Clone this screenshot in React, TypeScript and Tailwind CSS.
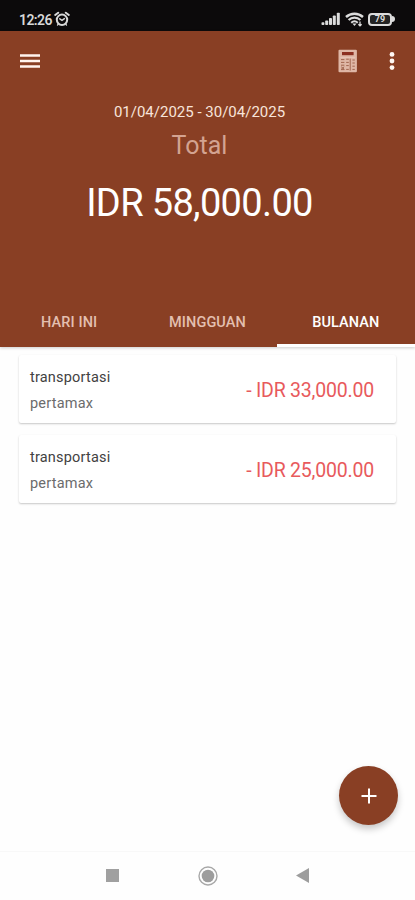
interface Transaction {
  id: number;
  category: string;
  note: string;
  amount: string;
}

const transactions: Transaction[] = [
  { id: 1, category: "transportasi", note: "pertamax", amount: "- IDR 33,000.00" },
  { id: 2, category: "transportasi", note: "pertamax", amount: "- IDR 25,000.00" },
];

const tabs = ["HARI INI", "MINGGUAN", "BULANAN"];

function AlarmIcon() {
  return (
    <svg width="16" height="16" viewBox="0 0 16 16" fill="none" stroke="#d8d8d8" strokeLinecap="round">
      <circle cx="8" cy="8.8" r="5.2" strokeWidth="2" />
      <path d="M1.2 4 4.2 1.7M14.8 4 11.8 1.7" strokeWidth="2" />
      <path d="M5.8 7.8 8 9.4l2.4-1.8" strokeWidth="1.5" />
      <path d="m4.2 13.2-.7.9M11.8 13.2l.7.9" strokeWidth="1.3" />
    </svg>
  );
}

function SignalIcon() {
  return (
    <svg width="20" height="14" viewBox="0 0 20 14" fill="#dcdcdc">
      <rect x="0.5" y="10.2" width="2.9" height="2.8" rx="0.8" />
      <rect x="4.2" y="8.4" width="3" height="4.6" rx="0.8" />
      <rect x="8" y="6" width="3" height="7" rx="0.8" />
      <rect x="11.8" y="3.4" width="3" height="9.6" rx="0.8" />
      <rect x="15.8" y="0.8" width="3" height="12.2" rx="0.8" />
    </svg>
  );
}

function WifiIcon() {
  return (
    <svg width="19" height="15" viewBox="0 0 19 15" fill="none" stroke="#dcdcdc">
      <path d="M1 5C5.8.6 13.2.6 18 5" strokeWidth="2.4" />
      <path d="M3.6 8c3.4-3.1 8.4-3.1 11.8 0" strokeWidth="2.3" />
      <path d="M6.2 10.7c1.9-1.6 4.7-1.6 6.6 0" strokeWidth="2" />
      <path d="M7.4 11.6h4.2L9.5 14z" fill="#dcdcdc" stroke="none" />
      <path d="M15 9.6v4.2M13.4 12.2l1.6 1.6 1.6-1.6" strokeWidth="1.3" />
    </svg>
  );
}

function Battery() {
  return (
    <div className="flex items-center">
      <div className="flex h-[13px] w-[24px] items-center justify-center rounded-[4px] border-2 border-[#dcdcdc] bg-[#242424] text-[9px] leading-none font-bold text-[#dcdcdc]">
        79
      </div>
      <div className="h-[6px] w-[3px] rounded-r-full bg-[#dcdcdc]" />
    </div>
  );
}

function CalculatorIcon() {
  return (
    <svg width="20" height="24" viewBox="0 0 20 24">
      <rect x="0.5" y="0.8" width="18.4" height="22.4" rx="1" fill="#dfb7a6" />
      <rect x="4" y="3" width="11.6" height="3.2" fill="#8c2f20" />
      <path d="M2.4 8.6h14.8" stroke="#e7c6b8" strokeWidth="1" />
      <g stroke="#a1654f" strokeWidth="1" fill="none">
        <path d="M3 10.6h3.4M3 13.4h3.4M3 16.2h3.4M3 20.6h3.4" />
        <path d="m3.2 17.8 3 2.4M6.2 17.8l-3 2.4" />
        <path d="M8.2 10.2h2.6M8.2 13.4h2.6M8.2 16.6h2.6M8.2 20.4h2.6" />
        <path d="M12.2 9.6v12M14.4 11h2.4M14.4 14h2.4M14.4 17.2h2.4M14.4 20.4h2.4" />
      </g>
    </svg>
  );
}

function StatusBar() {
  return (
    <div className="flex h-[31px] items-center justify-between bg-[#0c0a0b] pt-[7px] pr-[20px] pl-[19px]">
      <div className="flex items-center gap-[2px]">
        <span className="w-[33px] pt-[1px] text-[14px] leading-[16px] font-semibold tracking-[-0.6px] text-[#d8d8d8]">
          12:26
        </span>
        <AlarmIcon />
      </div>
      <div className="flex items-center gap-[4px]">
        <SignalIcon />
        <WifiIcon />
        <Battery />
      </div>
    </div>
  );
}

function TransactionCard({ item }: { item: Transaction }) {
  return (
    <div className="flex h-[68px] items-center justify-between rounded-[2px] bg-white pr-[22px] pl-[11px] shadow-[0_1px_2px_rgba(0,0,0,0.22)]">
      <div className="pt-[3px] text-[14.5px] leading-[26px] tracking-[0.2px]">
        <p className="text-[#424242]">{item.category}</p>
        <p className="text-[#6c6c6c]">{item.note}</p>
      </div>
      <span className="pt-[3px] text-[19.5px] leading-[24px] tracking-[-0.2px] text-[#e85a5c]">{item.amount}</span>
    </div>
  );
}

export default function App() {
  return (
    <div className="relative flex h-[900px] w-[415px] flex-col overflow-hidden bg-[#fefefe] font-[Roboto,sans-serif]">
      <StatusBar />

      <header className="flex h-[316px] flex-col bg-[#893f24] text-white shadow-[0_1px_3px_rgba(0,0,0,0.2)]">
        <div className="flex h-[60px] items-center justify-between pr-[20px] pl-[20px]">
          <button aria-label="Menu">
            <svg width="20" height="16" viewBox="0 0 20 16" stroke="#fff4ee" strokeWidth="2.3">
              <path d="M0 2.5h20M0 8h20M0 13.5h20" />
            </svg>
          </button>
          <div className="flex items-center gap-[31px]">
            <CalculatorIcon />
            <svg width="6" height="20" viewBox="0 0 6 20" fill="#fff8f4">
              <circle cx="3" cy="3.4" r="2.4" />
              <circle cx="3" cy="10" r="2.4" />
              <circle cx="3" cy="16.6" r="2.4" />
            </svg>
          </div>
        </div>

        <div className="flex flex-1 flex-col items-center pt-[11px] pr-[16px]">
          <p className="text-[15px] leading-[20px] text-[#f8e4da]">01/04/2025 - 30/04/2025</p>
          <p className="mt-[9px] text-[25px] leading-[30px] text-[#d3a391]">Total</p>
          <p className="mt-[18px] text-[38px] leading-[48px] tracking-[-0.65px]">IDR 58,000.00</p>
        </div>

        <nav className="grid h-[50px] grid-cols-3">
          {tabs.map((tab) => {
            const active = tab === "BULANAN";
            return (
              <button
                key={tab}
                className={
                  active
                    ? "border-b-[3px] border-white pt-[5px] text-[14.5px] font-medium tracking-[0.1px] text-white"
                    : "border-b-[3px] border-transparent pt-[5px] text-[14.5px] font-medium tracking-[0.1px] text-[#e3bfb0]"
                }
              >
                {tab}
              </button>
            );
          })}
        </nav>
      </header>

      <main className="flex flex-1 flex-col gap-[12px] px-[19px] pt-[8px]">
        {transactions.map((item) => (
          <TransactionCard key={item.id} item={item} />
        ))}
      </main>

      <button
        aria-label="Tambah"
        className="absolute top-[766px] left-[339px] flex size-[59px] items-center justify-center rounded-full bg-[#893f24] shadow-[0_4px_7px_rgba(0,0,0,0.22)]"
      >
        <svg width="16" height="16" viewBox="0 0 16 16" stroke="#fff" strokeWidth="2">
          <path d="M8 .5v15M.5 8h15" />
        </svg>
      </button>

      {/* System navigation */}
      <footer className="flex h-[49px] items-center justify-between border-t border-[#f8f8f8] pr-[106px] pb-[1px] pl-[106px]">
        <span className="size-[13px] bg-[#a0a0a0]" />
        <svg width="20" height="20" viewBox="0 0 20 20">
          <circle cx="10" cy="10" r="9" fill="none" stroke="#a8a8a8" strokeWidth="1.4" />
          <circle cx="10" cy="10" r="6.3" fill="#9d9d9d" />
        </svg>
        <svg width="13" height="15" viewBox="0 0 13 15" fill="#9d9d9d">
          <path d="M13 0v15L0 7.5z" />
        </svg>
      </footer>
    </div>
  );
}
